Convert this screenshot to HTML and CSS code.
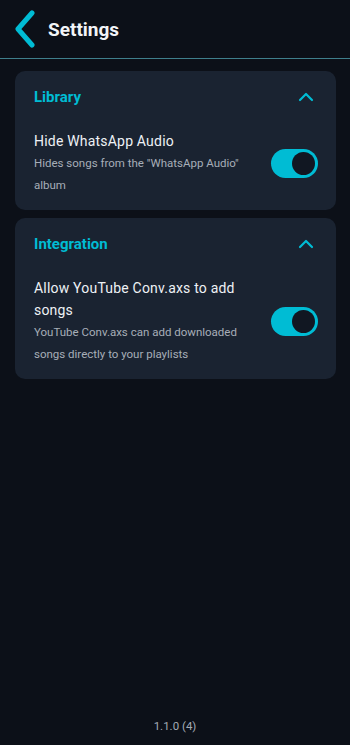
FILE: index.html
```html
<!DOCTYPE html>
<html>
<head>
  <link rel="stylesheet" href="styles.css">
</head>
<body>
  <div class="app">
    <header class="topbar">
      <button class="back-button" aria-label="Back">
        <svg width="24" height="38" viewBox="0 0 24 38">
          <path d="M19 3 L5 19 L19 35" fill="none" stroke="#00bcd4" stroke-width="5" stroke-linecap="round" stroke-linejoin="round"/>
        </svg>
      </button>
      <h1 class="title">Settings</h1>
    </header>

    <main class="content">
      <section class="card">
        <div class="card-header">
          <span class="card-title">Library</span>
          <svg class="chevron" width="16" height="10" viewBox="0 0 16 10">
            <path d="M2 8 L8 2 L14 8" fill="none" stroke="#00bcd4" stroke-width="2.2" stroke-linecap="round" stroke-linejoin="round"/>
          </svg>
        </div>
        <div class="setting-row">
          <div class="setting-text">
            <div class="setting-name">Hide WhatsApp Audio</div>
            <div class="setting-desc">Hides songs from the "WhatsApp Audio" album</div>
          </div>
          <div class="toggle on"><span class="knob"></span></div>
        </div>
      </section>

      <section class="card">
        <div class="card-header">
          <span class="card-title">Integration</span>
          <svg class="chevron" width="16" height="10" viewBox="0 0 16 10">
            <path d="M2 8 L8 2 L14 8" fill="none" stroke="#00bcd4" stroke-width="2.2" stroke-linecap="round" stroke-linejoin="round"/>
          </svg>
        </div>
        <div class="setting-row">
          <div class="setting-text">
            <div class="setting-name">Allow YouTube Conv.axs to add songs</div>
            <div class="setting-desc">YouTube Conv.axs can add downloaded songs directly to your playlists</div>
          </div>
          <div class="toggle on"><span class="knob"></span></div>
        </div>
      </section>
    </main>

    <footer class="version">1.1.0 (4)</footer>
  </div>
</body>
</html>
```

FILE: styles.css
```css
html, body {
  margin: 0;
  padding: 0;
  background-color: #0c1018;
}

body {
  font-family: Roboto, "Noto Sans", sans-serif;
  color: #eef1f5;
}

.app {
  display: flex;
  flex-direction: column;
  height: 745px;
}

.topbar {
  display: flex;
  align-items: center;
  height: 59px;
  border-bottom: 1px solid #3f7f8c;
  box-sizing: border-box;
  padding-left: 13px;
}

.back-button {
  display: flex;
  align-items: center;
  background: none;
  border: none;
  padding: 0;
  margin-right: 11px;
  cursor: pointer;
}

.title {
  margin: 0;
  font-size: 19px;
  font-weight: 700;
  color: #f2f4f7;
}

.content {
  flex: 1;
  display: flex;
  flex-direction: column;
  gap: 8px;
  padding: 12px 14px 0 15px;
}

.card {
  background-color: #1a2331;
  border-radius: 10px;
  padding: 0 18px 14px 19px;
}

.card-header {
  display: flex;
  align-items: center;
  justify-content: space-between;
  height: 52px;
}

.card-title {
  font-size: 15px;
  font-weight: 700;
  color: #00bcd4;
}

.chevron {
  margin-right: 4px;
}

.setting-row {
  display: flex;
  align-items: center;
  gap: 16px;
  padding-top: 7px;
}

.setting-text {
  flex: 1;
}

.setting-name {
  font-size: 14px;
  line-height: 22px;
  letter-spacing: 0.2px;
  color: #eef1f5;
}

.setting-desc {
  font-size: 11.5px;
  line-height: 22px;
  letter-spacing: 0;
  color: #a7aeb8;
}

.toggle {
  position: relative;
  width: 47px;
  height: 29px;
  border-radius: 15px;
  background-color: #2b3544;
  flex-shrink: 0;
}

.toggle.on {
  background-color: #00bcd4;
}

.knob {
  position: absolute;
  top: 3px;
  right: 3px;
  width: 23px;
  height: 23px;
  border-radius: 50%;
  background-color: #111722;
}

.version {
  text-align: center;
  font-size: 11.5px;
  line-height: 22px;
  color: #a3aab4;
  padding-bottom: 8px;
}
```
